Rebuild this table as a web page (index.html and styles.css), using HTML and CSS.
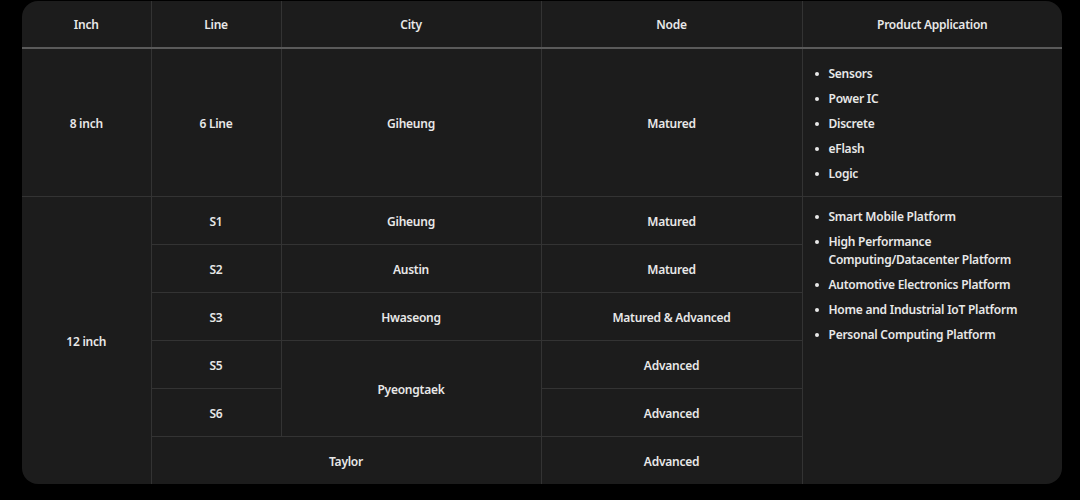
FILE: index.html
```html
<!DOCTYPE html>
<html>
<head>
<meta charset="utf-8">
<link rel="stylesheet" href="styles.css">
</head>
<body>
<div class="card">
  <table class="fab">
    <colgroup>
      <col class="c-inch"><col class="c-line"><col class="c-city"><col class="c-node"><col class="c-app">
    </colgroup>
    <thead>
      <tr class="head">
        <th>Inch</th><th>Line</th><th>City</th><th>Node</th><th>Product Application</th>
      </tr>
    </thead>
    <tbody>
      <tr class="tall">
        <td>8 inch</td><td>6 Line</td><td>Giheung</td><td>Matured</td>
        <td class="app app-mid">
          <ul class="bullets">
            <li>Sensors</li><li>Power IC</li><li>Discrete</li><li>eFlash</li><li>Logic</li>
          </ul>
        </td>
      </tr>
      <tr>
        <td rowspan="6" class="no-bottom">12 inch</td><td>S1</td><td>Giheung</td><td>Matured</td>
        <td rowspan="6" class="app app-top no-bottom">
          <ul class="bullets">
            <li>Smart Mobile Platform</li>
            <li>High Performance<br>Computing/Datacenter Platform</li>
            <li>Automotive Electronics Platform</li>
            <li>Home and Industrial IoT Platform</li>
            <li>Personal Computing Platform</li>
          </ul>
        </td>
      </tr>
      <tr><td>S2</td><td>Austin</td><td>Matured</td></tr>
      <tr><td>S3</td><td>Hwaseong</td><td>Matured &amp; Advanced</td></tr>
      <tr><td>S5</td><td rowspan="2">Pyeongtaek</td><td>Advanced</td></tr>
      <tr><td>S6</td><td>Advanced</td></tr>
      <tr class="last"><td colspan="2" class="no-bottom">Taylor</td><td class="no-bottom">Advanced</td></tr>
    </tbody>
  </table>
</div>
</body>
</html>
```
FILE: styles.css
```css
html, body {
  margin: 0;
  padding: 0;
  background: #000;
}
body {
  padding: 1px 18px 0 22px;
  font-family: "Noto Sans", "Liberation Sans", sans-serif;
  font-weight: 600;
  font-size: 12px;
  letter-spacing: -0.25px;
  color: #e8e8e8;
}
.card {
  width: 1040px;
  height: 483px;
  background: #1c1c1c;
  border-radius: 16px;
  overflow: hidden;
}
.fab {
  width: 1040px;
  border-collapse: collapse;
  table-layout: fixed;
}
.c-inch { width: 129px; }
.c-line { width: 130px; }
.c-city { width: 260px; }
.c-node { width: 261px; }
.c-app { width: 260px; }
th, td {
  text-align: center;
  vertical-align: middle;
  padding: 3px 0 0;
  border: 1px solid #333;
  line-height: 18px;
}
th {
  font-weight: 600;
  height: 44px;
  padding-top: 2px;
  border-top: none;
  border-bottom: 2px solid #5a5a5a;
}
th:first-child, td:first-child { border-left: none; }
th:last-child, .app { border-right: none; }
tbody tr { height: 48px; }
tbody tr.tall { height: 148px; }
.no-bottom { border-bottom: none; }
.app {
  text-align: left;
  padding-left: 12px;
}
.app-top {
  vertical-align: top;
  padding-top: 11px;
}
.bullets {
  list-style: none;
  margin: 0;
  padding: 0;
}
.bullets li {
  display: flex;
  margin-bottom: 7px;
}
.bullets li:last-child { margin-bottom: 0; }
.bullets li::before {
  content: "";
  flex: none;
  width: 4px;
  height: 4px;
  border-radius: 50%;
  background: #e8e8e8;
  margin: 7px 10px 0 0;
}
```
